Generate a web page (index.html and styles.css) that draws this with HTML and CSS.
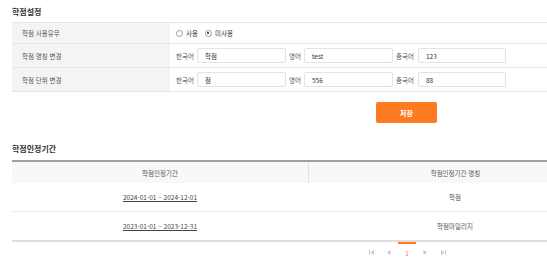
FILE: index.html
```html
<!DOCTYPE html>
<html lang="ko">
<head>
<meta charset="utf-8">
<link rel="stylesheet" href="styles.css">
</head>
<body>
<div class="page">
 <div class="inner">
  <h2 class="title t1">학점설정</h2>
  <div class="form">
    <div class="row r1">
      <div class="label">학점 사용유무</div>
      <div class="cell">
        <label class="radio"><span class="dot"></span>사용</label>
        <label class="radio"><span class="dot on"></span>미사용</label>
      </div>
    </div>
    <div class="row">
      <div class="label">학점 명칭 변경</div>
      <div class="cell">
        <span class="lang ko">한국어</span><span class="input w1">학점</span>
        <span class="lang en">영어</span><span class="input w2">test</span>
        <span class="lang zh">중국어</span><span class="input w3">123</span>
      </div>
    </div>
    <div class="row">
      <div class="label">학점 단위 변경</div>
      <div class="cell">
        <span class="lang ko">한국어</span><span class="input w1">점</span>
        <span class="lang en">영어</span><span class="input w2">556</span>
        <span class="lang zh">중국어</span><span class="input w3">88</span>
      </div>
    </div>
  </div>
  <div class="actions"><button class="save">저장</button></div>

  <h2 class="title t2">학점인정기간</h2>
  <div class="list">
    <div class="lrow head">
      <div class="lc c1">학점인정기간</div>
      <div class="lc c2">학점인정기간 명칭</div>
    </div>
    <div class="lrow">
      <div class="lc c1"><a class="link">2024-01-01 ~ 2024-12-01</a></div>
      <div class="lc c2">학점</div>
    </div>
    <div class="lrow last">
      <div class="lc c1"><a class="link">2023-01-01 ~ 2023-12-31</a></div>
      <div class="lc c2">학점마일리지</div>
    </div>
  </div>
  <div class="pager">
    <span class="pg"><svg width="5" height="5" viewBox="0 0 5 5"><rect x="0" y="0" width="1" height="5" fill="#c8c8c8"/><polygon points="5,0 5,5 1.5,2.5" fill="#c8c8c8"/></svg></span>
    <span class="pg"><svg width="4" height="5" viewBox="0 0 4 5"><polygon points="3.5,0 3.5,5 0,2.5" fill="#c8c8c8"/></svg></span>
    <span class="pg cur">1</span>
    <span class="pg"><svg width="4" height="5" viewBox="0 0 4 5"><polygon points="0.5,0 0.5,5 4,2.5" fill="#c8c8c8"/></svg></span>
    <span class="pg"><svg width="5" height="5" viewBox="0 0 5 5"><polygon points="0,0 0,5 3.5,2.5" fill="#c8c8c8"/><rect x="4" y="0" width="1" height="5" fill="#c8c8c8"/></svg></span>
  </div>
 </div>
</div>
</body>
</html>
```
FILE: styles.css
```css
html, body {
  margin: 0;
  padding: 0;
  overflow: hidden;
  background: #fff;
}
body {
  font-family: "Noto Sans CJK KR", "Noto Sans", sans-serif;
  color: #444;
  font-size: 6.5px;
}
.page {
  width: 535px;
  padding-left: 12px;
  overflow: hidden;
}
.inner {
  width: 590px;
}
.title {
  margin: 0;
  font-size: 8px;
  font-weight: 700;
  color: #333;
  line-height: 10px;
}
.t1 {
  padding-top: 7px;
  height: 15px;
}
.form {
  border-top: 1px solid #e6e6e6;
}
.row {
  display: flex;
  height: 23px;
  border-bottom: 1px solid #e6e6e6;
}
.r1 { height: 20px; }
.label {
  width: 148px;
  padding-left: 10px;
  background: #f4f4f4;
  display: flex;
  align-items: center;
  color: #555;
}
.cell {
  flex: 1;
  display: flex;
  align-items: center;
  padding-left: 6px;
  color: #444;
}
.radio {
  display: flex;
  align-items: center;
  margin-right: 7px;
  color: #333;
}
.dot {
  width: 7px;
  height: 7px;
  border: 1px solid #999;
  border-radius: 50%;
  margin-right: 3px;
  box-sizing: border-box;
  position: relative;
}
.dot.on::after {
  content: "";
  position: absolute;
  left: 1.5px;
  top: 1.5px;
  width: 2px;
  height: 2px;
  border-radius: 50%;
  background: #222;
}
.lang {
  color: #555;
  white-space: nowrap;
}
.ko { width: 21px; }
.en { width: 15px; }
.zh { width: 22px; }
.input {
  height: 15px;
  box-sizing: border-box;
  border: 1px solid #e3e3e3;
  border-radius: 2px;
  padding-left: 7px;
  display: flex;
  align-items: center;
  color: #333;
  margin-right: 3px;
}
.w1 { width: 89px; }
.w2 { width: 89px; }
.w3 { width: 88px; }
.actions {
  padding-top: 10px;
  padding-left: 364px;
  height: 21px;
}
.save {
  width: 61px;
  height: 21px;
  border: 0;
  border-radius: 2px;
  background: #ff7b22;
  color: #fff;
  font-family: inherit;
  font-size: 7px;
  font-weight: 700;
  padding: 0;
}
.t2 {
  margin-top: 21px;
  height: 16px;
  padding-top: 0;
}
.list {
  border-top: 2px solid #a0a0a0;
}
.lrow {
  display: flex;
  height: 28px;
  border-bottom: 1px solid #ececec;
}
.lrow.last { border-bottom: 2px solid #dedede; }
.lrow.head {
  height: 21px;
  background: #f8f8f8;
  border-bottom: 0;
}
.lc {
  display: flex;
  align-items: center;
  justify-content: center;
  color: #555;
}
.c1 { width: 296px; }
.c2 { flex: 1; }
.head .c2 { border-left: 1px solid #e2e2e2; }
.link {
  text-decoration: underline;
  color: #444;
}
.pager {
  display: flex;
  padding-left: 350px;
  height: 19px;
  align-items: flex-start;
}
.pg {
  width: 18px;
  height: 17px;
  display: flex;
  align-items: center;
  justify-content: center;
  border-top: 2px solid transparent;
}
.pg.cur {
  border-top-color: #ff7b22;
  color: #ff7b22;
}
```
